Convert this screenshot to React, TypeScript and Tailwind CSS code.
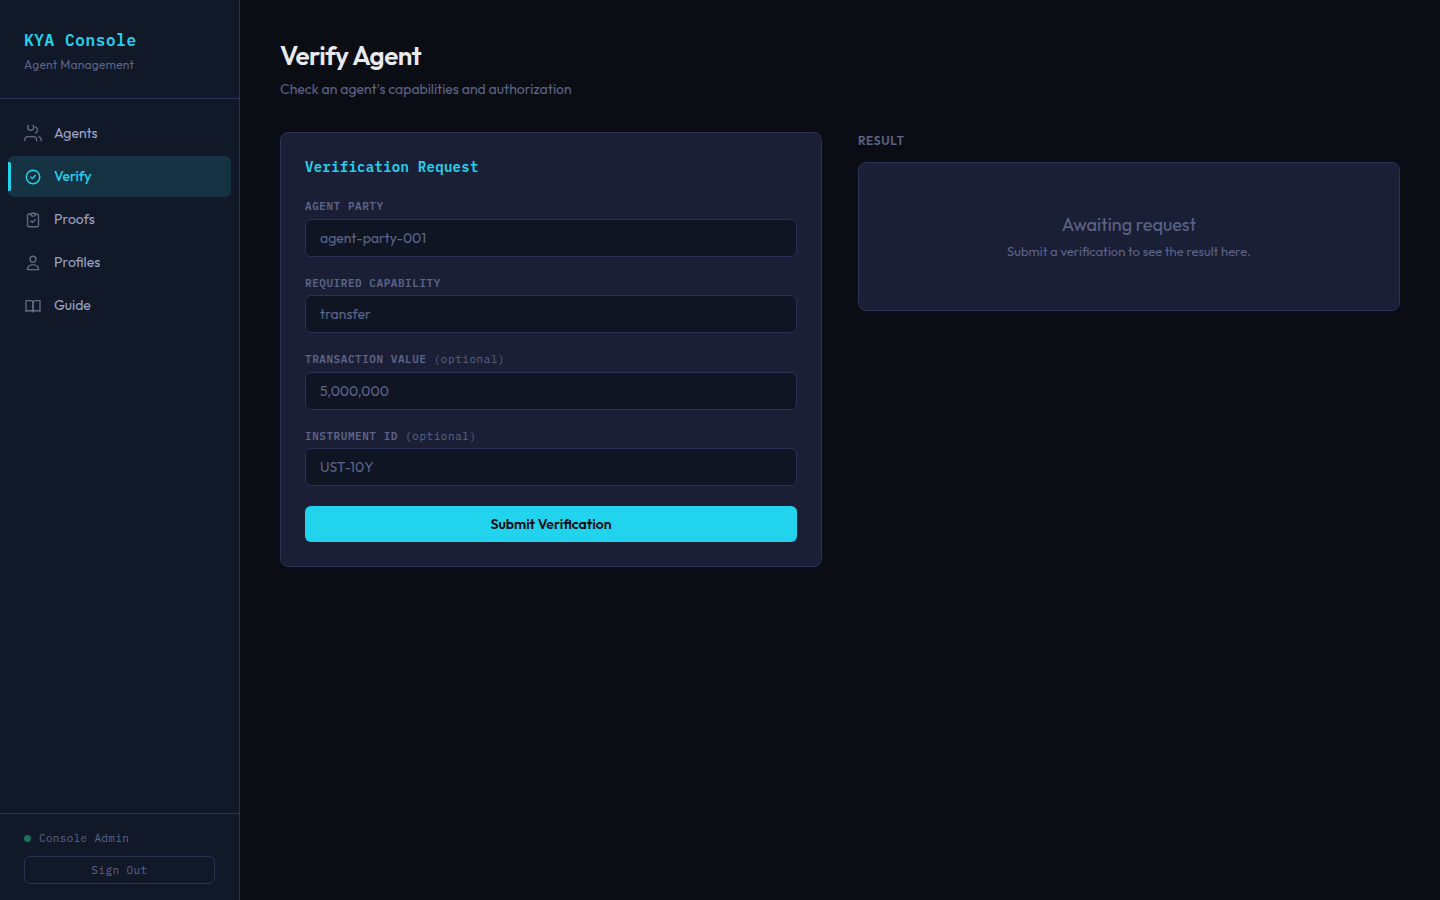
import React from "react";

type IconName = "agents" | "verify" | "proofs" | "profiles" | "guide";

const shapes: Record<IconName, React.ReactNode> = {
  agents: (
    <>
      <path d="M14 17.5v-1.2a3.3 3.3 0 0 0-3.3-3.3H4.3A3.3 3.3 0 0 0 1 16.3v1.2" />
      <circle cx="7.5" cy="2.6" r="3.4" />
      <path d="M19 17.5v-1.2a3.3 3.3 0 0 0-2.5-3.2" />
      <path d="M12.7 2.4a3.4 3.4 0 0 1 0 6.5" />
    </>
  ),
  verify: (
    <>
      <circle cx="10" cy="10" r="7.5" />
      <path d="M7.5 10l1.8 1.8 3.2-3.4" />
    </>
  ),
  proofs: (
    <>
      <path d="M7.5 3.3H5.4A1.5 1.5 0 0 0 3.9 4.8V16a1.5 1.5 0 0 0 1.5 1.5h9.2a1.5 1.5 0 0 0 1.5-1.5V4.8a1.5 1.5 0 0 0-1.5-1.5h-2.1" />
      <path d="M7.5 3.5a1 1 0 0 1 1-1h3a1 1 0 0 1 1 1v.4a1.8 1.8 0 0 1-1.8 1.8H9.3a1.8 1.8 0 0 1-1.8-1.8z" />
      <path d="M7.5 11l1.8 1.8 3.2-3.4" />
    </>
  ),
  profiles: (
    <>
      <circle cx="10" cy="5.8" r="3.3" />
      <path d="M3.7 17.3a6.3 5.5 0 0 1 12.6 0z" />
    </>
  ),
  guide: (
    <>
      <path d="M2.2 16V4h5.3A2.5 2.5 0 0 1 10 6v10.5a2.2 2.2 0 0 0-2.2-1.2H2.2" />
      <path d="M17.8 16V4h-5.3A2.5 2.5 0 0 0 10 6v10.5a2.2 2.2 0 0 1 2.2-1.2h5.6" />
    </>
  ),
};

function Icon({ name }: { name: IconName }) {
  return (
    <svg
      className="size-[18px] shrink-0 overflow-hidden"
      viewBox="0 0 20 20"
      fill="none"
      stroke="currentColor"
      strokeWidth="1.5"
      strokeLinecap="round"
      strokeLinejoin="round"
      aria-hidden="true"
    >
      {shapes[name]}
    </svg>
  );
}

const navItems: { icon: IconName; label: string; active?: boolean }[] = [
  { icon: "agents", label: "Agents" },
  { icon: "verify", label: "Verify", active: true },
  { icon: "proofs", label: "Proofs" },
  { icon: "profiles", label: "Profiles" },
  { icon: "guide", label: "Guide" },
];

function Sidebar() {
  return (
    <aside className="flex w-60 shrink-0 flex-col border-r border-[#2a3154] bg-[#111827]">
      <div className="border-b border-[#2a3154] px-6 pt-7 pb-6">
        <div className="font-['IBM_Plex_Mono','Liberation_Mono',monospace] text-base leading-6 font-semibold tracking-[0.04em] text-[#22d3ee]">
          KYA Console
        </div>
        <div className="mt-1 text-xs leading-[18px] tracking-[0.02em] text-[#5c6488]">Agent Management</div>
      </div>
      <nav className="flex flex-1 flex-col gap-0.5 px-2 py-3.5">
        {navItems.map(({ icon, label, active }) => (
          <a
            key={label}
            href={`#${label.toLowerCase()}`}
            aria-current={active ? "page" : undefined}
            className={
              active
                ? "relative flex items-center gap-3 rounded-md bg-[#153243] px-4 pt-2.5 pb-[11px] text-sm leading-5 font-medium text-[#22d3ee]"
                : "flex items-center gap-3 rounded-md px-4 pt-2.5 pb-[11px] text-sm leading-5 text-[#9ba3c4]"
            }
          >
            {active && <span className="absolute inset-y-1.5 left-0 w-[3px] rounded-r-xs bg-[#22d3ee]" />}
            <span className={active ? "pt-px" : "pt-px opacity-60"}>
              <Icon name={icon} />
            </span>
            {label}
          </a>
        ))}
      </nav>
      <div className="border-t border-[#2a3154] px-6 py-4 font-['IBM_Plex_Mono','Liberation_Mono',monospace] text-[11px] leading-4 text-[#5c6488]">
        <div className="flex items-center gap-2 tracking-[0.03em]">
          <span className="size-[7px] rounded-full bg-[#20705f]" />
          Console Admin
        </div>
        <button type="button" className="mt-2.5 h-7 w-full rounded-md border border-[#2a3154] tracking-[0.04em]">
          Sign Out
        </button>
      </div>
    </aside>
  );
}

const fields = [
  { id: "agent-party", label: "AGENT PARTY", placeholder: "agent-party-001" },
  { id: "capability", label: "REQUIRED CAPABILITY", placeholder: "transfer" },
  { id: "value", label: "TRANSACTION VALUE", placeholder: "5,000,000", optional: true },
  { id: "instrument", label: "INSTRUMENT ID", placeholder: "UST-10Y", optional: true },
];

function VerificationForm() {
  return (
    <form
      className="rounded-lg border border-[#2a3154] bg-[#1a1f35] p-6"
      onSubmit={(event) => event.preventDefault()}
    >
      <h2 className="mb-[21px] font-['IBM_Plex_Mono','Liberation_Mono',monospace] text-sm leading-5 font-semibold tracking-[0.02em] text-[#22d3ee]">
        Verification Request
      </h2>
      <div className="flex flex-col gap-[18px]">
        {fields.map(({ id, label, placeholder, optional }) => (
          <div key={id}>
            <label
              htmlFor={id}
              className="mb-1 block font-['IBM_Plex_Mono','Liberation_Mono',monospace] text-[11px] leading-normal font-semibold tracking-wider text-[#5c6488]"
            >
              {label}
              {optional && <span className="font-normal"> (optional)</span>}
            </label>
            <input
              id={id}
              type="text"
              placeholder={placeholder}
              className="block h-[38px] w-full rounded-md border border-[#2a3154] bg-[#0f1523] px-3.5 text-sm text-[#e8eaf0] placeholder:text-[#5c6488]"
            />
          </div>
        ))}
      </div>
      <button
        type="submit"
        className="mt-5 block h-9 w-full rounded-md bg-[#22d3ee] text-sm font-semibold text-[#0a0d14]"
      >
        Submit Verification
      </button>
    </form>
  );
}

export default function App() {
  return (
    <div className="flex min-h-screen bg-[#0a0d14] font-['Outfit','Lato',sans-serif]">
      <Sidebar />
      <main className="min-w-0 flex-1 p-10">
        <h1 className="text-[26px] leading-8 font-semibold tracking-[-0.02em] text-[#e8eaf0]">Verify Agent</h1>
        <p className="mt-1.5 text-sm leading-[22px] text-[#5c6488]">
          Check an agent's capabilities and authorization
        </p>
        <div className="mt-8 grid grid-cols-2 items-start gap-9">
          <VerificationForm />
          <section>
            <h2 className="mb-3 text-xs leading-[18px] font-semibold tracking-wider text-[#5c6488]">RESULT</h2>
            <div className="rounded-lg border border-[#2a3154] bg-[#1a1f35] px-6 pt-12 pb-[50px] text-center text-[#5c6488]">
              <p className="text-lg leading-[27px]">Awaiting request</p>
              <p className="mt-1 text-[13px] leading-[18px]">Submit a verification to see the result here.</p>
            </div>
          </section>
        </div>
      </main>
    </div>
  );
}
